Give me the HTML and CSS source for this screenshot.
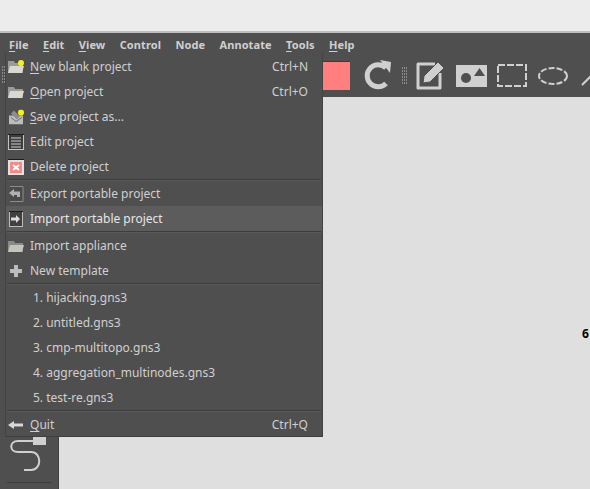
FILE: index.html
```html
<!DOCTYPE html>
<html lang="en">
<head>
<meta charset="utf-8">
<title>GNS3</title>
<link rel="stylesheet" href="styles.css">
</head>
<body>
<div class="titlebar"></div>
<div class="window">
  <nav class="menubar">
    <span class="mi"><u>F</u>ile</span>
    <span class="mi"><u>E</u>dit</span>
    <span class="mi"><u>V</u>iew</span>
    <span class="mi">Control</span>
    <span class="mi">Node</span>
    <span class="mi">Annotate</span>
    <span class="mi"><u>T</u>ools</span>
    <span class="mi"><u>H</u>elp</span>
  </nav>
  <div class="toolbar">
    <svg class="lgrip" width="4" height="18" viewBox="0 0 4 18"><path d="M0 1h4M0 4h4M0 7h4M0 10h4M0 13h4M0 16h4" stroke="#8a8a8a" stroke-width="2" stroke-dasharray="1 1"/></svg>
    <div class="stop"></div>
    <svg class="ti redo" width="30" height="32" viewBox="0 0 30 32"><path d="M24 23.500a11 11 0 1 1 0-15.500" fill="none" stroke="#d0d0d0" stroke-width="5"/><path d="M18 0l11 2-1 11z" fill="#d0d0d0"/></svg>
    <svg class="grip" width="6" height="18" viewBox="0 0 6 18"><path d="M0 1h6M0 4h6M0 7h6M0 10h6M0 13h6M0 16h6" stroke="#8a8a8a" stroke-width="2" stroke-dasharray="1 1"/></svg>
    <svg class="ti edit" width="32" height="30" viewBox="0 0 32 30"><path d="M25 12v15H3V3h17" fill="none" stroke="#d0d0d0" stroke-width="3" stroke-linejoin="round"/><path d="M9 15L23 1l6 6-14 14-7 1z" fill="#d0d0d0" stroke="#4f4f4f"/></svg>
    <svg class="ti" width="31" height="22" viewBox="0 0 31 22"><rect width="31" height="22" fill="#d0d0d0"/><circle cx="10" cy="13" r="5" fill="#4f4f4f"/><path d="M18 11l5.500-8 5.500 8z" fill="#4f4f4f"/></svg>
    <svg class="ti dash" width="30" height="23" viewBox="0 0 30 23"><rect x="1" y="1" width="28" height="21" fill="none" stroke="#d0d0d0" stroke-width="2" stroke-dasharray="7 2"/></svg>
    <svg class="ti" width="30" height="20" viewBox="0 0 30 20"><ellipse cx="15" cy="10" rx="14" ry="8" fill="none" stroke="#d0d0d0" stroke-width="2" stroke-dasharray="6 2"/></svg>
    <svg class="ti line" width="30" height="20" viewBox="0 0 30 20"><path d="M1 19L12 8" stroke="#d0d0d0" stroke-width="2"/></svg>
  </div>
  <div class="main">
    <aside class="dock">
      <svg class="cable" width="42" height="36" viewBox="0 0 42 36"><path d="M28 4H13C4 4 4 15 13 15H26C37 15 37 33 26 33H19" fill="none" stroke="#d0d0d0" stroke-width="2"/><rect x="28" y="0" width="13" height="8" fill="#d0d0d0"/></svg>
      <div class="docksep"></div>
    </aside>
    <div class="canvas"><b class="label">6</b></div>
  </div>
</div>
<div class="menu">
  <div class="row"><svg class="ic" width="16" height="14" viewBox="0 0 16 14"><path d="M0 1h6l1 2h8v10H0z" fill="#9a9a9a"/><path d="M2 6h14l-2 7H0z" fill="#d8d8d0"/><circle cx="13" cy="3" r="3" fill="#f2f020"/></svg><span class="tx"><u>N</u>ew blank project</span><span class="key">Ctrl+N</span></div>
  <div class="row"><svg class="ic" width="16" height="14" viewBox="0 0 16 14"><path d="M0 2h6l1 2h8v9H0z" fill="#9a9a9a"/><path d="M2 6h14l-2 7H0z" fill="#d8d8d0"/></svg><span class="tx"><u>O</u>pen project</span><span class="key">Ctrl+O</span></div>
  <div class="row"><svg class="ic" width="16" height="15" viewBox="0 0 16 15"><path d="M1 6h14v9H1z" fill="#bcbcbc"/><path d="M3 4l3-3 6 6-3 3z" fill="#8e8e8e"/><path d="M3 8l5 4 6-4" fill="none" stroke="#6e6e6e"/><circle cx="13" cy="3" r="3" fill="#f2f020"/></svg><span class="tx"><u>S</u>ave project as...</span></div>
  <div class="row"><svg class="ic" width="16" height="16" viewBox="0 0 16 16"><rect x="0.500" y="0.500" width="15" height="15" fill="#3d3d3d" stroke="#c4c4c4"/><path d="M0 0.500h16" stroke="#1e1e1e"/><path d="M3 4h10M3 7h10M3 10h10M3 13h10" stroke="#d0d0d0"/></svg><span class="tx">Edit project</span></div>
  <div class="row"><svg class="ic" width="16" height="16" viewBox="0 0 16 16"><rect width="16" height="16" fill="#e2e2e2"/><path d="M0 0.500h16" stroke="#1e1e1e"/><rect x="2" y="3" width="12" height="11" fill="#f28a8a"/><path d="M5 6l6 5M11 6l-6 5" stroke="#fff" stroke-width="2"/></svg><span class="tx">Delete project</span></div>
  <div class="sep"></div>
  <div class="row"><svg class="ic" width="16" height="16" viewBox="0 0 16 16"><path d="M2 0.500h13v15H2" fill="#4a4a4a" stroke="#8d8d8d"/><path d="M1 7l5-4v2.500h6V11H9V9H6v2z" fill="#b0b0b0"/></svg><span class="tx">Export portable project</span></div>
  <div class="row hot"><svg class="ic" width="16" height="16" viewBox="0 0 16 16"><rect x="1.500" y="0.500" width="13" height="15" fill="#404040" stroke="#bcbcbc"/><path d="M1 0.500h14" stroke="#1e1e1e"/><path d="M12 8L8 4v2.500H3v3h5V12z" fill="#dcdcdc"/></svg><span class="tx">Import portable project</span></div>
  <div class="sep"></div>
  <div class="row"><svg class="ic" width="16" height="14" viewBox="0 0 16 14"><path d="M0 2h6l1 2h8v9H0z" fill="#8a8a8a"/><path d="M2 6h14l-2 7H0z" fill="#c4c4bc"/></svg><span class="tx">Import appliance</span></div>
  <div class="row"><svg class="ic" width="16" height="16" viewBox="0 0 16 16"><path d="M8 2v12M2 8h12" stroke="#bdbdbd" stroke-width="4"/></svg><span class="tx">New template</span></div>
  <div class="sep"></div>
  <div class="row"><span class="tx rec">1. hijacking.gns3</span></div>
  <div class="row"><span class="tx rec">2. untitled.gns3</span></div>
  <div class="row"><span class="tx rec">3. cmp-multitopo.gns3</span></div>
  <div class="row"><span class="tx rec">4. aggregation_multinodes.gns3</span></div>
  <div class="row"><span class="tx rec">5. test-re.gns3</span></div>
  <div class="sep"></div>
  <div class="row"><svg class="ic" width="16" height="16" viewBox="0 0 16 16"><path d="M0 8l6-4v2.500h9v3H6V12z" fill="#d8d8d8"/></svg><span class="tx"><u>Q</u>uit</span><span class="key">Ctrl+Q</span></div>
</div>
</body>
</html>
```
FILE: styles.css
```css
* { box-sizing: border-box; }
html, body { margin: 0; height: 100%; overflow: hidden; }
body {
  display: flex;
  flex-direction: column;
  font-family: "Noto Sans", sans-serif;
  font-size: 12px;
  color: #d2d2d2;
  background: #4f4f4f;
}
u { text-underline-offset: 2px; }
.titlebar { height: 33px; flex: none; background: #ececec; border-bottom: 2px solid #bdbdbd; }
.window { flex: 1; display: flex; flex-direction: column; min-height: 0; }
.menubar {
  height: 22px;
  flex: none;
  display: flex;
  align-items: center;
  padding-left: 9px;
  gap: 14.300px;
  font-size: 11px;
  font-weight: 700;
  letter-spacing: 0.1px;
  color: #cfcfcf;
}
.toolbar {
  height: 42px;
  flex: none;
  display: flex;
  align-items: center;
  padding-left: 323px;
  padding-bottom: 1px;
  position: relative;
}
.lgrip { position: absolute; left: 2px; top: 11px; }
.stop { flex: none; width: 27px; height: 29px; background: #ff7f7f; border-top: 1px solid #3a3a3a; margin-right: 12px; }
.ti { flex: none; margin-right: 10px; }
.edit { margin-right: 9px; }
.dash { margin-right: 11px; }
.grip { flex: none; margin-right: 7px; }
.line { margin-right: 0; margin-left: 3px; }
.main { flex: 1; display: flex; min-height: 0; }
.dock { width: 59px; flex: none; border-right: 1px solid #3f3f3f; position: relative; }
.cable { position: absolute; left: 5px; top: 340px; }
.docksep { position: absolute; left: 7px; top: 385px; width: 44px; height: 1px; background: #3d3d3d; }
.canvas { flex: 1; background: #dfdfdf; position: relative; }
.label { position: absolute; left: 523px; top: 228px; font-size: 12px; color: #000; }
.menu {
  position: absolute;
  left: 5px;
  top: 53px;
  width: 318px;
  height: 384px;
  padding-top: 1px;
  background: #4f4f4f;
  border: 1px solid #434343;
  border-top: 0;
  border-bottom-color: #3e3e3e;
}
.row {
  height: 25px;
  display: flex;
  align-items: center;
  position: relative;
  padding-left: 24px;
  padding-right: 14px;
  font-size: 12px;
  color: #cfcfcf;
}
.hot { background: #5c5c5c; color: #e6e6e6; }
.ic { position: absolute; left: 2px; top: 50%; transform: translateY(-50%); }
.tx { flex: 1; white-space: nowrap; }
.rec { padding-left: 3px; }
.key { flex: none; }
.sep { height: 2px; margin: 0 1px; background: #3d3d3d; border-bottom: 1px solid #5a5a5a; }
```
